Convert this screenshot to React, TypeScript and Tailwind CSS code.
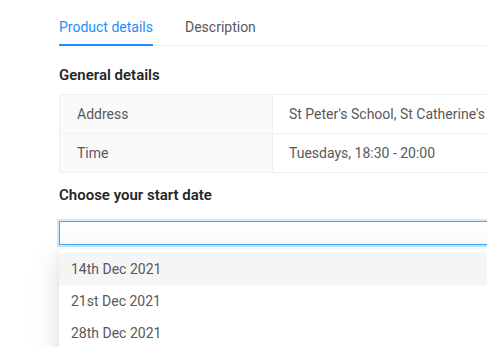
import React from "react";

export default function App() {
  const font = { fontFamily: "Roboto, 'Liberation Sans', sans-serif" };
  return (
    <div className="w-[487px] h-[347px] overflow-hidden bg-white" style={font}>
      <div className="w-[640px] pl-[59px]">
        <div className="flex gap-[32px] border-b border-[#f0f0f0] pt-[17px]">
          <div className="relative pb-[8px] text-[14px] leading-[20px] text-[#1890ff]">
            Product details
            <div className="absolute left-0 right-0 bottom-[-1px] h-[2px] bg-[#1890ff]" />
          </div>
          <div className="pb-[8px] text-[14px] leading-[20px] text-[#595959]">Description</div>
        </div>

        <div className="mt-[18px] mb-[8px] text-[15px] leading-[22px] font-semibold text-[#262626]">
          General details
        </div>

        <div className="border border-[#f0f0f0] text-[14px] text-[#595959]">
          <div className="flex h-[39px] border-b border-[#f0f0f0]">
            <div className="w-[213px] bg-[#fafafa] border-r border-[#f0f0f0] pl-[17px] flex items-center">Address</div>
            <div className="pl-[16px] flex items-center whitespace-nowrap">St Peter's School, St Catherine's Road</div>
          </div>
          <div className="flex h-[38px]">
            <div className="w-[213px] bg-[#fafafa] border-r border-[#f0f0f0] pl-[17px] flex items-center">Time</div>
            <div className="pl-[16px] flex items-center">Tuesdays, 18:30 - 20:00</div>
          </div>
        </div>

        <div className="mt-[11px] text-[15px] leading-[22px] font-semibold text-[#262626]">
          Choose your start date
        </div>

        <div className="mt-[15px] h-[24px] border border-[#40a9ff] bg-[#fdfdfd] shadow-[0_0_0_2px_rgba(24,144,255,0.2)]" />

        <div className="mt-[4px] pt-[4px] h-[120px] bg-white shadow-[0_3px_6px_-4px_rgba(0,0,0,0.12),0_6px_16px_0_rgba(0,0,0,0.08),0_9px_28px_8px_rgba(0,0,0,0.05)] text-[14px] text-[#595959]">
          <div className="h-[32px] flex items-center pl-[12px] bg-[#f5f5f5]">14th Dec 2021</div>
          <div className="h-[32px] flex items-center pl-[12px]">21st Dec 2021</div>
          <div className="h-[32px] flex items-center pl-[12px]">28th Dec 2021</div>
        </div>
      </div>
    </div>
  );
}
